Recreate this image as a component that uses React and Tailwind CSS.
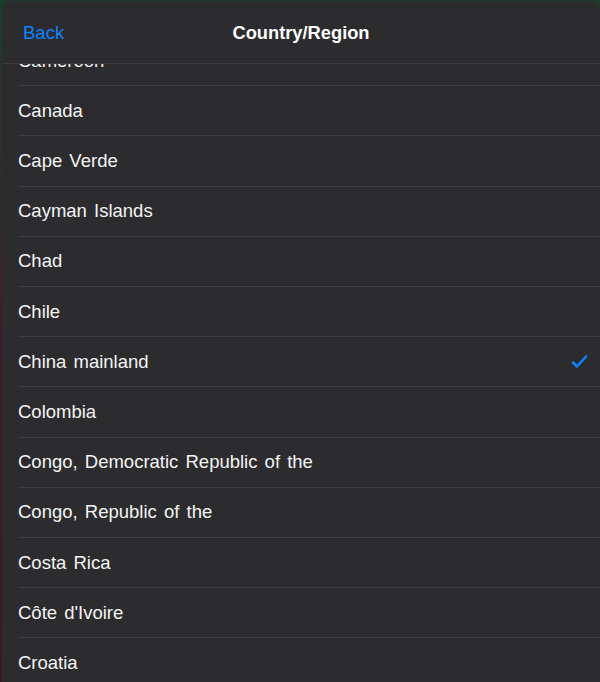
const countries = [
	"Cameroon",
	"Canada",
	"Cape Verde",
	"Cayman Islands",
	"Chad",
	"Chile",
	"China mainland",
	"Colombia",
	"Congo, Democratic Republic of the",
	"Congo, Republic of the",
	"Costa Rica",
	"Côte d'Ivoire",
	"Croatia",
	"Cuba",
];

const selected = "China mainland";

const CheckIcon = () => (
	<svg width="17" height="15" viewBox="0 0 17 15" fill="none">
		<path
			d="M2 8.5 L6 12.5 L15 2.5"
			stroke="#0a84ff"
			strokeWidth="2.6"
			strokeLinecap="round"
			strokeLinejoin="round"
		/>
	</svg>
);

const App = () => {
	return (
		<div
			className="h-[682px] w-[600px] overflow-hidden bg-gradient-to-b from-[#1f3a2c] via-[#3a1f2a] to-[#3b1a1e] pl-[2px] pt-[1px]"
			style={{ fontFamily: '"Liberation Sans", Arial, sans-serif' }}
		>
			<div className="flex h-[681px] flex-col overflow-hidden rounded-t-[10px] bg-[#2c2c2e]">
				{/* Header */}
				<div className="relative z-10 flex h-[63px] shrink-0 items-center border-b border-[#3a3a3c] bg-[#2c2c2e] pt-[1px]">
					<button type="button" className="ml-[21px] text-[18.5px] text-[#0a84ff]">
						Back
					</button>
					<h1 className="absolute left-0 right-0 pt-[1px] text-center text-[18.3px] font-bold text-white pointer-events-none">
						Country/Region
					</h1>
				</div>

				{/* List */}
				<div className="flex-1 overflow-hidden">
					<ul className="mt-[-28px]">
						{countries.map((name) => (
							<li key={name} className="h-[50.2px] pl-[16px]">
								<div className="flex h-full items-center justify-between border-b border-[#3d3d40] pr-[12px]">
									<span className="text-[18.5px] text-[#f4f4f4] [word-spacing:2px]">{name}</span>
									{name === selected && <CheckIcon />}
								</div>
							</li>
						))}
					</ul>
				</div>
			</div>
		</div>
	);
};

export default App;
